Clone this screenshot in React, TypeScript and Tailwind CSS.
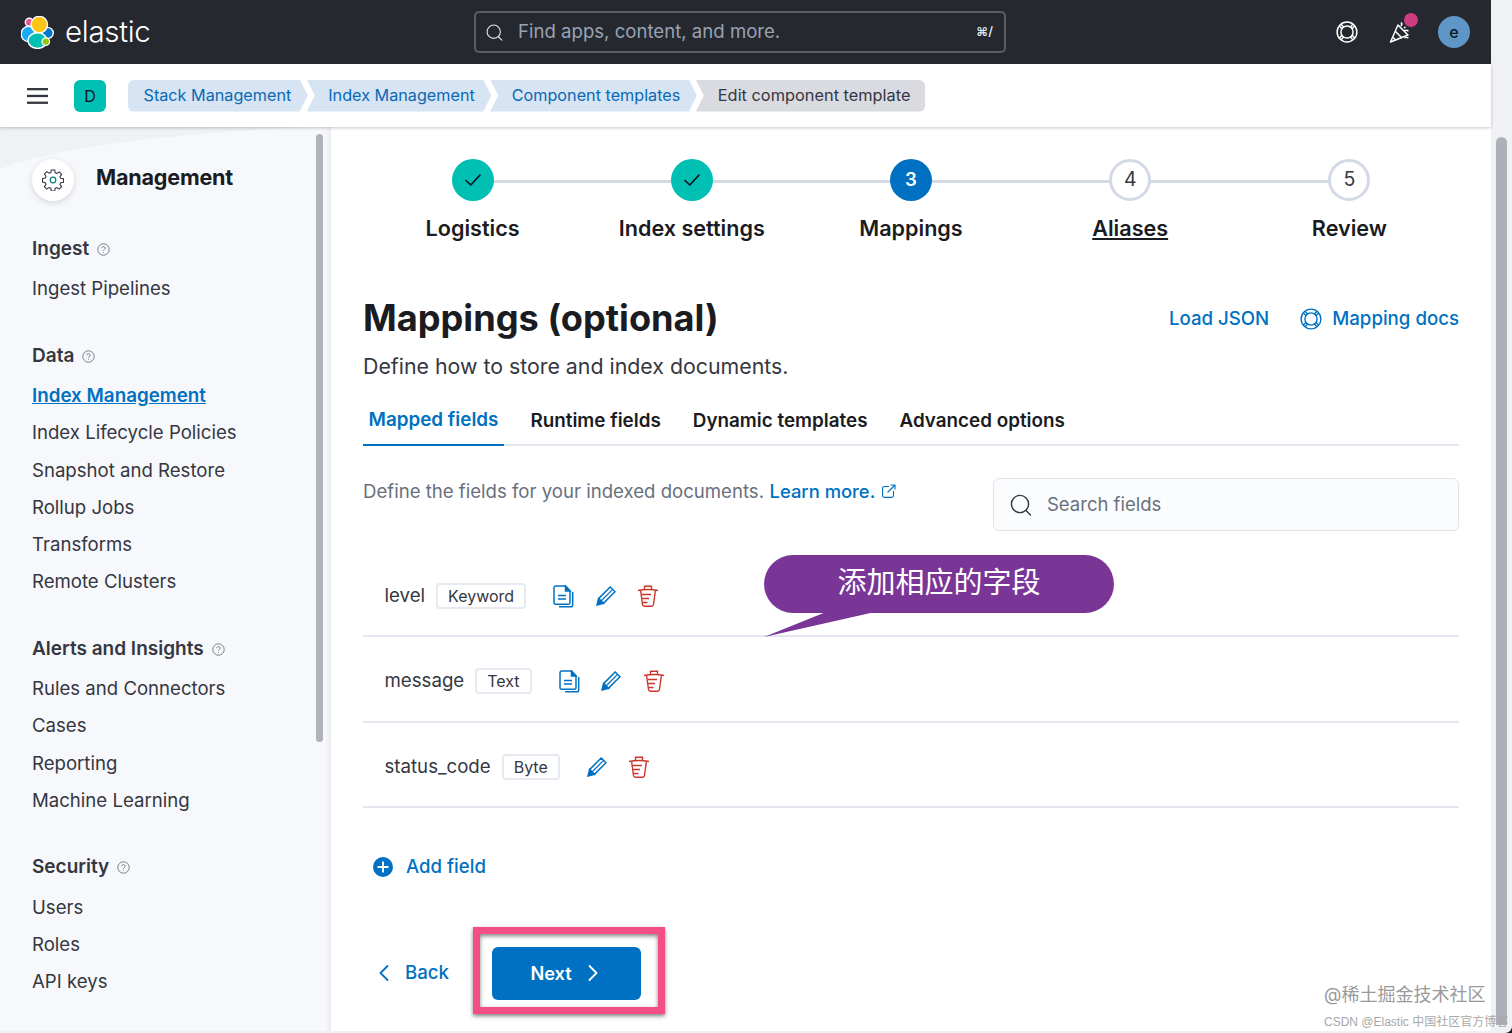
import React from "react";

const sections = [
  { title: "Ingest", items: ["Ingest Pipelines"] },
  {
    title: "Data",
    items: [
      "Index Management",
      "Index Lifecycle Policies",
      "Snapshot and Restore",
      "Rollup Jobs",
      "Transforms",
      "Remote Clusters",
    ],
  },
  {
    title: "Alerts and Insights",
    items: ["Rules and Connectors", "Cases", "Reporting", "Machine Learning"],
  },
  { title: "Security", items: ["Users", "Roles", "API keys"] },
];

const crumbs = ["Stack Management", "Index Management", "Component templates"];

const steps = [
  { label: "Logistics", state: "done" },
  { label: "Index settings", state: "done" },
  { label: "Mappings", state: "current", num: "3" },
  { label: "Aliases", state: "todo", num: "4", underline: true },
  { label: "Review", state: "todo", num: "5" },
];

const tabs = ["Mapped fields", "Runtime fields", "Dynamic templates", "Advanced options"];

const fields = [
  { name: "level", type: "Keyword", doc: true },
  { name: "message", type: "Text", doc: true },
  { name: "status_code", type: "Byte", doc: false },
];

function ElasticLogo() {
  return (
    <svg width="33" height="33" viewBox="0 0 33 33">
      <circle cx="8.3" cy="6.3" r="4" fill="#ee5097" stroke="#fff" strokeWidth="1.4" />
      <ellipse cx="7.2" cy="18" rx="7" ry="7.6" fill="#1ba9f5" stroke="#fff" strokeWidth="1.4" />
      <ellipse cx="26.3" cy="17" rx="6" ry="5.6" fill="#0077cc" stroke="#fff" strokeWidth="1.4" />
      <circle cx="18.3" cy="8.6" r="8.2" fill="#fec514" stroke="#fff" strokeWidth="1.4" />
      <ellipse cx="16.5" cy="24.6" rx="9.6" ry="7.8" fill="#00bfb3" stroke="#fff" strokeWidth="1.4" />
      <circle cx="24.8" cy="25.6" r="3.8" fill="#93c90e" stroke="#fff" strokeWidth="1.2" />
    </svg>
  );
}

function SearchIcon({ size, color }: { size: number; color: string }) {
  return (
    <svg width={size} height={size} viewBox="0 0 22 22" fill="none" stroke={color} strokeWidth="1.4">
      <circle cx="10" cy="10" r="8.6" />
      <path d="M16 16.5l4.5 4.5" strokeLinecap="round" />
    </svg>
  );
}

function HelpDot() {
  return (
    <svg width="13" height="13" viewBox="0 0 13 13" fill="none" stroke="#69707d" strokeWidth="0.9">
      <circle cx="6.5" cy="6.5" r="5.7" />
      <path d="M4.8 5.2c0-1 .8-1.6 1.7-1.6s1.7.6 1.7 1.5c0 1.3-1.7 1.3-1.7 2.6M6.5 9v.7" />
    </svg>
  );
}

function DocIcon() {
  return (
    <svg width="21" height="23" viewBox="0 0 21 23" fill="none" stroke="#0071c2" strokeWidth="1.5">
      <path d="M12.5 1H2.7C1.8 1 1 1.8 1 2.7v15c0 .9.8 1.6 1.7 1.6h12.6c.9 0 1.7-.7 1.7-1.6V6l-4.5-5z" />
      <path d="M12.5 1v5H17z" fill="#0071c2" />
      <path d="M5 10.5h8M5 14h8" />
      <path d="M19.7 7v13c0 1-.8 1.8-1.8 1.8H6" />
    </svg>
  );
}

function PencilIcon() {
  return (
    <svg width="20" height="20" viewBox="0 0 20 20" fill="none" stroke="#0071c2" strokeWidth="1.5">
      <path d="M14.2 1l4.8 4.8L7.4 17.4l-4.8-4.8z" />
      <path d="M5 15L16.6 3.4" strokeWidth="1.2" />
      <path d="M2.6 12.6L1 19l6.4-1.6z" fill="#0071c2" />
    </svg>
  );
}

function TrashIcon() {
  return (
    <svg width="22" height="22" viewBox="0 0 22 22" fill="none" stroke="#c9372c" strokeWidth="1.4">
      <path d="M1 5.5c6-1.2 14-1.2 20 0" />
      <path d="M7.5 4.5V1.2h7v3.3" />
      <path d="M3.6 5.5l1.9 14c.1 1 .9 1.7 1.9 1.7h7.2c1 0 1.8-.7 1.9-1.7l1.9-14" />
      <path d="M4.6 9.5h9.4M5.2 13.5H12M5.8 17.5h4.7" />
    </svg>
  );
}

function Chevron({ dir, color }: { dir: "left" | "right"; color: string }) {
  return (
    <svg width="12" height="18" viewBox="0 0 12 18" fill="none" stroke={color} strokeWidth="1.8">
      <path d={dir === "left" ? "M9.5 2L2.5 9l7 7" : "M2.5 2l7 7-7 7"} strokeLinecap="round" strokeLinejoin="round" />
    </svg>
  );
}

function LifeRing({ size, color, sw }: { size: number; color: string; sw: number }) {
  return (
    <svg width={size} height={size} viewBox="0 0 22 22" fill="none" stroke={color} strokeWidth={sw}>
      <circle cx="11" cy="11" r="9.9" />
      <circle cx="11" cy="11" r="6.1" />
      {[45, 135, 225, 315].map((a) => (
        <path key={a} d="M9.8 5V1.3M12.2 5V1.3" transform={`rotate(${a} 11 11)`} />
      ))}
    </svg>
  );
}

function Sidebar() {
  return (
    <aside className="relative w-[331px] shrink-0 bg-[#f7f8fb] pl-8 pt-[31px] shadow-[inset_-6px_0_6px_-6px_rgba(60,70,90,0.15)]">
      <svg className="absolute left-0 top-0" width="300" height="45" viewBox="0 0 300 45">
        <path d="M0 0h300C190 6 60 18 0 42z" fill="#eff1f5" />
      </svg>
      <div className="absolute right-2 top-[7px] h-[608px] w-[7px] rounded-full bg-[#b0b3bb]" />
      <div className="relative flex h-11 items-center">
        <div className="flex h-[42px] w-[42px] items-center justify-center rounded-full bg-white shadow-[0_2px_6px_rgba(60,70,90,0.18)]">
          <svg width="22" height="22" viewBox="0 0 22 22" fill="none" stroke="#343741" strokeWidth="1.1">
            <path d="M9.3 1h3.4l.5 2.8 1.7.7 2.3-1.6 2.4 2.4-1.6 2.3.7 1.7 2.8.5v3.4l-2.8.5-.7 1.7 1.6 2.3-2.4 2.4-2.3-1.6-1.7.7-.5 2.8H9.3l-.5-2.8-1.7-.7-2.3 1.6-2.4-2.4 1.6-2.3-.7-1.7L.5 13V9.5l2.8-.5.7-1.7-1.6-2.3 2.4-2.4 2.3 1.6 1.7-.7z" />
            <circle cx="11" cy="11" r="2.8" stroke="#017d73" strokeWidth="1.2" />
          </svg>
        </div>
        <span className="ml-[22px] pb-[4px] text-[21.6px] leading-none font-bold tracking-[-0.2px] text-[#1a1c21]">Management</span>
      </div>
      <div className="relative mt-[29px] flex flex-col gap-[29.6px]">
        {sections.map((s) => (
          <div key={s.title}>
            <div className="flex h-[37px] items-center gap-2 text-[19px] font-semibold text-[#343741]">
              {s.title}
              <HelpDot />
            </div>
            <ul className="mt-[2.7px]">
              {s.items.map((item) => (
                <li
                  key={item}
                  className={
                    item === "Index Management"
                      ? "flex h-[37.3px] items-center text-[18.8px] font-semibold text-[#0071c2] underline"
                      : "flex h-[37.3px] items-center text-[18.6px] text-[#343741]"
                  }
                >
                  {item}
                </li>
              ))}
            </ul>
          </div>
        ))}
      </div>
    </aside>
  );
}

function Stepper() {
  return (
    <div className="grid grid-cols-5">
      {steps.map((s, i) => (
        <div key={s.label} className="relative flex flex-col items-center">
          {i < steps.length - 1 && (
            <div className="absolute left-1/2 top-[21px] h-[3px] w-full bg-[#d3dae6]" />
          )}
          {s.state === "done" && (
            <div className="relative flex h-[42px] w-[42px] items-center justify-center rounded-full bg-[#00bfb3]">
              <svg width="16" height="12" viewBox="0 0 16 12" fill="none" stroke="#07101c" strokeWidth="1.6">
                <path d="M1 6.5L5.8 11 15 1" strokeLinecap="round" strokeLinejoin="round" />
              </svg>
            </div>
          )}
          {s.state === "current" && (
            <div className="relative flex h-[42px] w-[42px] items-center justify-center rounded-full bg-[#0071c2] text-[18.67px] font-semibold text-white">
              {s.num}
            </div>
          )}
          {s.state === "todo" && (
            <div className="relative flex h-[42px] w-[42px] items-center justify-center rounded-full border-[3px] border-[#d3dae6] bg-white text-[19.5px] text-[#343741]">
              {s.num}
            </div>
          )}
          <div
            className={
              s.underline
                ? "mt-[13px] text-[21.6px] leading-[28px] font-semibold text-[#1a1c21] underline"
                : "mt-[13px] text-[21.6px] leading-[28px] font-semibold text-[#1a1c21]"
            }
          >
            {s.label}
          </div>
        </div>
      ))}
    </div>
  );
}

function FieldRow({ name, type, doc }: { name: string; type: string; doc: boolean }) {
  return (
    <div className="flex h-[85.3px] items-center border-b-2 border-[#e4e7ee] pl-[21.5px] pt-[5px]">
      <span className="text-[18.67px] text-[#343741]">{name}</span>
      <span className="ml-[11px] flex h-[26px] items-center rounded-[4px] border-2 border-[#e6e9f0] bg-white px-[10px] text-[16px] text-[#343741]">
        {type}
      </span>
      <div className="ml-[27px] flex items-center gap-[21.5px]">
        {doc && <DocIcon />}
        <PencilIcon />
        <TrashIcon />
      </div>
    </div>
  );
}

export default function App() {
  return (
    <div className="relative flex h-[1033px] w-[1512px] overflow-hidden bg-[#f0f1f5] font-['Inter','Noto_Sans_CJK_SC',sans-serif]">
      <div className="flex h-[1031px] w-[1491px] shrink-0 flex-col">
        {/* Top bar */}
        <header className="relative flex h-16 shrink-0 items-center bg-[#25282f] pl-[21px] pr-[21px]">
          <div className="flex w-[453px] items-center gap-[11px]">
            <ElasticLogo />
            <span className="text-[29.5px] leading-none font-light tracking-[-0.3px] text-white">elastic</span>
          </div>
          <div className="flex h-[42px] w-[532px] items-center rounded-[5px] border-2 border-[#5a5e68] pl-[10px] pr-[11px]">
            <SearchIcon size={17} color="#dfe5ef" />
            <span className="ml-[15px] text-[18.6px] text-[#98a2b3]">Find apps, content, and more.</span>
            <span className="ml-auto text-[12.5px] font-semibold text-[#dfe5ef]">⌘/</span>
          </div>
          <div className="ml-auto flex items-center">
            <LifeRing size={22} color="#fff" sw={1.5} />
            <div className="relative ml-[31px]">
              <svg width="24" height="24" viewBox="0 0 24 24" fill="none" stroke="#fff" strokeWidth="1.5">
                <path d="M1.5 22L9 5l10 10z" strokeLinejoin="round" />
                <path d="M6.5 11.5l6.5 6.5M4 17.5l3 3" />
                <path d="M12 6c1-1.2 1-2.5 0-3.5M15 11c1.5-1 3-1 4.5.3M15 8l1.5-1.2M15.5 18c1-.7 3-.8 3.8.3" />
              </svg>
              <span className="absolute -top-[7px] left-[15px] h-[14px] w-[14px] rounded-full bg-[#cc3d7f]" />
            </div>
            <div className="ml-[25px] flex h-8 w-8 items-center justify-center rounded-full bg-[#5e96c8] text-[16px] font-medium text-[#10161f]">
              e
            </div>
          </div>
        </header>

        {/* Breadcrumb bar */}
        <div className="z-10 flex h-[63px] shrink-0 items-center bg-white pl-[27px] shadow-[0_1px_3px_rgba(60,70,90,0.3)]">
          <svg width="21" height="16" viewBox="0 0 21 16" fill="#343741">
            <rect width="21" height="2.3" />
            <rect y="6.8" width="21" height="2.3" />
            <rect y="13.6" width="21" height="2.3" />
          </svg>
          <div className="ml-[26px] flex h-8 w-8 items-center justify-center rounded-[6px] bg-[#00bfb3] text-[16px] text-[#07101c]">
            D
          </div>
          <div className="ml-[22px] flex items-center">
            {crumbs.map((c, i) => (
              <div
                key={c}
                className={
                  i === 0
                    ? "-mr-[1px] flex h-8 items-center rounded-l-[6px] bg-[#d6e4f3] pl-[15.5px] pr-[16.5px] text-[16.2px] text-[#0b69b3] [clip-path:polygon(0_0,calc(100%-8px)_0,100%_50%,calc(100%-8px)_100%,0_100%)]"
                    : "-mr-[1px] flex h-8 items-center bg-[#d6e4f3] pl-[21.5px] pr-[16.5px] text-[16.2px] text-[#0b69b3] [clip-path:polygon(0_0,calc(100%-8px)_0,100%_50%,calc(100%-8px)_100%,0_100%,8px_50%)]"
                }
              >
                {c}
              </div>
            ))}
            <div className="flex h-8 items-center rounded-r-[6px] bg-[#d9dbe0] pl-[22px] pr-[15px] text-[16.35px] text-[#343741] [clip-path:polygon(0_0,100%_0,100%_100%,0_100%,8px_50%)]">
              Edit component template
            </div>
          </div>
        </div>

        {/* Body */}
        <div className="flex min-h-0 flex-1">
          <Sidebar />
          <main className="min-w-0 flex-1 bg-white px-8 pt-8">
            <Stepper />
            <div className="mt-[52px] flex items-center justify-between">
              <h1 className="text-[36.2px] leading-[48px] font-bold text-[#1a1c21]">Mappings (optional)</h1>
              <div className="flex items-center pt-[2px] text-[18.67px] font-medium text-[#0071c2]">
                <span>Load JSON</span>
                <span className="ml-[31px]">
                  <LifeRing size={22} color="#0071c2" sw={1.4} />
                </span>
                <span className="ml-[10px]">Mapping docs</span>
              </div>
            </div>
            <p className="mt-[10px] text-[21.33px] leading-[28px] text-[#343741]">Define how to store and index documents.</p>
            <div className="mt-[10px] flex h-[56px] gap-[21px] border-b-2 border-[#e4e7ee]">
              {tabs.map((t, i) => (
                <div
                  key={t}
                  className={
                    i === 0
                      ? "-mb-[2px] flex items-center border-b-2 border-[#0071c2] px-[5.5px] pt-[6px] text-[18.85px] font-semibold text-[#0071c2]"
                      : "-mb-[2px] flex items-center px-[5.5px] pt-[6px] text-[18.85px] font-semibold text-[#1a1c21]"
                  }
                >
                  {t}
                </div>
              ))}
            </div>
            <div className="mt-[32px] flex items-start justify-between">
              <p className="flex items-center text-[18.6px] leading-[26px] text-[#69707d]">
                Define the fields for your indexed documents.
                <span className="ml-[5.5px] text-[18.4px] font-medium text-[#0071c2]">Learn more.</span>
                <svg className="ml-[7px]" width="14" height="14" viewBox="0 0 14 14" fill="none" stroke="#0071c2" strokeWidth="1.1">
                  <path d="M7 2.5H2.2c-.9 0-1.6.7-1.6 1.6v7.7c0 .9.7 1.6 1.6 1.6h7.7c.9 0 1.6-.7 1.6-1.6V7" />
                  <path d="M5.5 8.5L13 1M8.5 1H13v4.5" />
                </svg>
              </p>
              <div className="flex h-[53px] w-[466px] items-center rounded-[6px] border border-[#dfe3ea] bg-[#fbfcfd] pl-[16px]">
                <SearchIcon size={22} color="#343741" />
                <span className="ml-[15px] pt-[1px] text-[18.5px] text-[#69707d]">Search fields</span>
              </div>
            </div>
            <div className="mt-[21px]">
              {fields.map((f) => (
                <FieldRow key={f.name} {...f} />
              ))}
            </div>
            <div className="mt-[45px] flex items-center pl-[10px] text-[18.6px] font-medium text-[#0071c2]">
              <svg width="20" height="20" viewBox="0 0 20 20">
                <circle cx="10" cy="10" r="10" fill="#0071c2" />
                <path d="M10 4.5v11M4.5 10h11" stroke="#fff" strokeWidth="1.8" />
              </svg>
              <span className="ml-[13px]">Add field</span>
            </div>
            <div className="mt-[66px] flex items-center pl-[15px]">
              <Chevron dir="left" color="#0071c2" />
              <span className="ml-[15px] text-[18.67px] font-medium text-[#0071c2]">Back</span>
              <div className="ml-[43px] flex h-[53px] w-[149px] items-center justify-center gap-[15px] rounded-[6px] bg-[#0071c2] pr-[4px] text-[18.2px] font-semibold text-white">
                Next
                <Chevron dir="right" color="#fff" />
              </div>
            </div>
          </main>
        </div>
      </div>

      {/* Page scrollbar */}
      <div className="absolute left-[1496px] top-[137px] h-[888px] w-[11px] rounded-t-full bg-[#adb0b8]" />

      {/* Annotations drawn over the screenshot */}
      <div className="absolute left-[764px] top-[555px] flex h-[58px] w-[350px] items-center justify-center rounded-full bg-[#7a3697] pb-[2px] text-[29px] text-white">
        添加相应的字段
      </div>
      <svg className="absolute left-[764px] top-[612px]" width="112" height="26" viewBox="0 0 112 26">
        <path d="M62 0L0 25 111 0z" fill="#7a3697" />
      </svg>
      <div className="absolute left-[473px] top-[927px] h-[87px] w-[192px] border-[7px] border-[#f44e87] shadow-[0_2px_4px_rgba(0,0,0,0.5),inset_0_2px_4px_rgba(0,0,0,0.5)]" />

      {/* Watermarks */}
      <div className="absolute left-[1324px] top-[983px] text-[18px] leading-[24px] text-[#9a9a9a]">@稀土掘金技术社区</div>
      <div className="absolute left-[1324px] top-[1014px] font-['Liberation_Sans','Noto_Sans_CJK_SC',sans-serif] text-[12px] leading-[16px] whitespace-nowrap text-[#a8a8a8]">
        CSDN @Elastic 中国社区官方博客
      </div>

      {/* Window corner */}
      <svg className="absolute bottom-0 right-0" width="7" height="7" viewBox="0 0 7 7">
        <path d="M7 0v7H0C4 7 7 4 7 0z" fill="#1a1c21" />
      </svg>
    </div>
  );
}
